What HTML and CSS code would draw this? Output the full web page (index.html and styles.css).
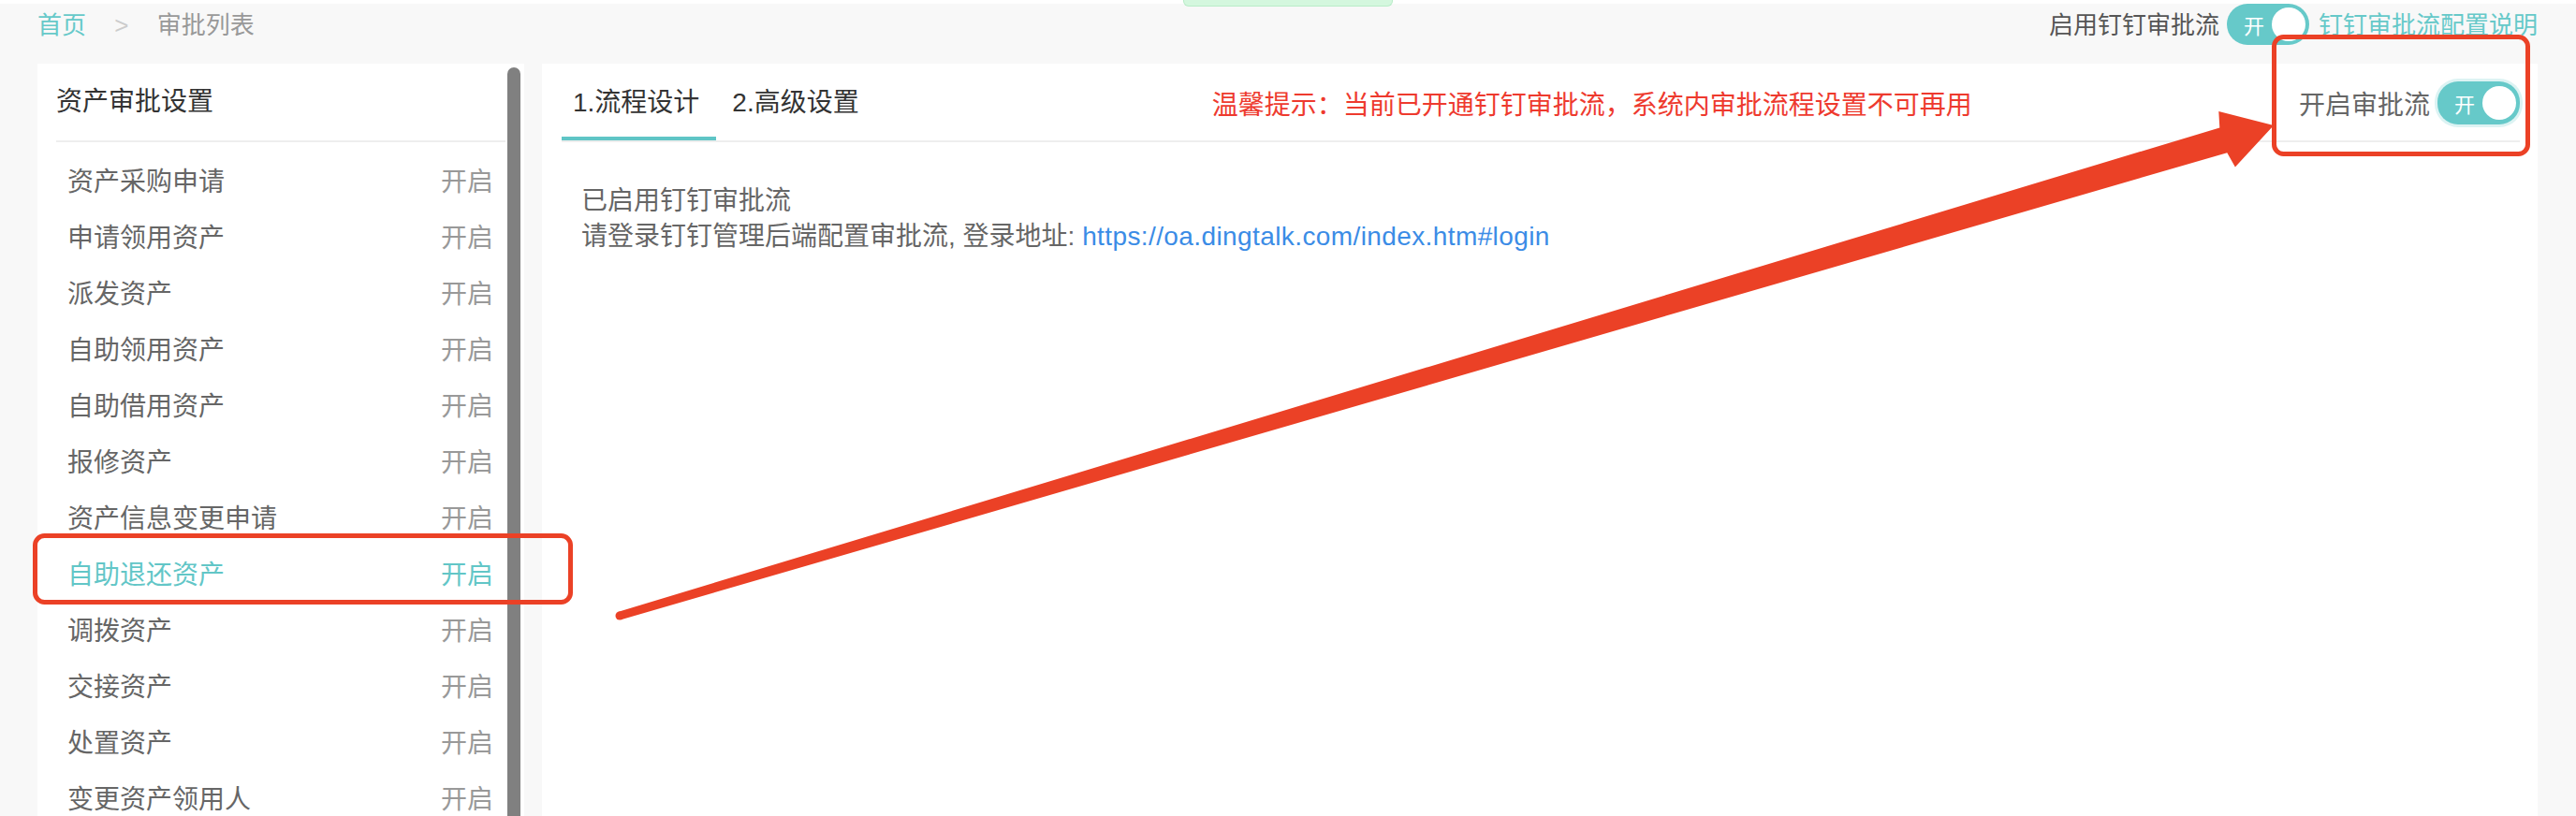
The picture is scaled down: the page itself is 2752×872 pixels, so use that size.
FILE: index.html
```html
<!DOCTYPE html>
<html lang="zh-CN">
<head>
  <meta charset="UTF-8">
  <meta name="viewport" content="width=device-width, initial-scale=1.0">
  <title>审批列表</title>
  <link rel="stylesheet" href="styles.css">
</head>
<body>

  <div class="top-strip"></div>
  <div class="toast"></div>

  <div class="header">
    <div class="breadcrumb">
      <a class="crumb-home" href="#">首页</a>
      <span class="crumb-sep">&gt;</span>
      <span class="crumb-current">审批列表</span>
    </div>
    <div class="header-right">
      <span class="header-label">启用钉钉审批流</span>
      <span class="switch"><span class="switch-text">开</span><span class="switch-knob"></span></span>
      <a class="header-link" href="#">钉钉审批流配置说明</a>
    </div>
  </div>

  <div class="main">
    <div class="side">
      <div class="side-main">
        <div class="side-title">资产审批设置</div>
        <ul class="side-list">
          <li class="side-item"><span>资产采购申请</span><span class="state">开启</span></li>
          <li class="side-item"><span>申请领用资产</span><span class="state">开启</span></li>
          <li class="side-item"><span>派发资产</span><span class="state">开启</span></li>
          <li class="side-item"><span>自助领用资产</span><span class="state">开启</span></li>
          <li class="side-item"><span>自助借用资产</span><span class="state">开启</span></li>
          <li class="side-item"><span>报修资产</span><span class="state">开启</span></li>
          <li class="side-item"><span>资产信息变更申请</span><span class="state">开启</span></li>
          <li class="side-item active"><span>自助退还资产</span><span class="state">开启</span></li>
          <li class="side-item"><span>调拨资产</span><span class="state">开启</span></li>
          <li class="side-item"><span>交接资产</span><span class="state">开启</span></li>
          <li class="side-item"><span>处置资产</span><span class="state">开启</span></li>
          <li class="side-item"><span>变更资产领用人</span><span class="state">开启</span></li>
        </ul>
      </div>
      <div class="scrollbar"></div>
    </div>

    <div class="content">
      <div class="tabs">
        <div class="tab active">1.流程设计</div>
        <div class="tab tab-second">2.高级设置</div>
        <div class="notice">温馨提示：当前已开通钉钉审批流，系统内审批流程设置不可再用</div>
        <div class="tabs-right">
          <span class="tabs-label">开启审批流</span>
          <span class="switch switch-focus"><span class="switch-text">开</span><span class="switch-knob"></span></span>
        </div>
      </div>
      <div class="content-body">
        <p>已启用钉钉审批流</p>
        <p>请登录钉钉管理后端配置审批流, 登录地址: <a class="link" href="#">https://oa.dingtalk.com/index.htm#login</a></p>
      </div>
    </div>
  </div>

  <!-- 标注：红框和箭头 -->
  <svg class="annot" width="2752" height="872" viewBox="0 0 2752 872">
    <rect x="37.5" y="572.5" width="572" height="71" rx="10" fill="none" stroke="#eb4126" stroke-width="5"/>
    <rect x="2429.5" y="39.5" width="271" height="125" rx="10" fill="none" stroke="#eb4126" stroke-width="5"/>
    <polygon fill="#eb4126" points="660.7,653.7 2371.3,136.4 2370.3,119 2429,134 2387.9,178.4 2379.3,163.2 663.3,662.3"/>
    <circle cx="662" cy="658" r="4.5" fill="#eb4126"/>
  </svg>

</body>
</html>
```

FILE: styles.css
```css
html, body {
  height: 872px;
  overflow: hidden;
}

body {
  font-family: "Liberation Sans", "Noto Sans CJK SC", sans-serif;
  background-color: #f8f8f8;
  margin: 0;
  padding: 0 41px 0 40px;
  position: relative;
  color: #666;
}

a {
  text-decoration: none;
}

.top-strip {
  height: 4px;
  margin: 0 -41px 0 -40px;
  background: #fff;
}

.toast {
  position: absolute;
  top: 0;
  left: 1264px;
  width: 222px;
  height: 6px;
  background: #d4f7de;
  border: 1px solid #b9ecc8;
  border-top: none;
  border-radius: 0 0 6px 6px;
}

.header {
  display: flex;
  justify-content: space-between;
  align-items: center;
  height: 40px;
  margin-bottom: 24px;
  font-size: 26px;
}

.crumb-home {
  color: #66c9c9;
}

.crumb-sep {
  color: #ccc;
  padding: 0 23px;
}

.crumb-current {
  color: #999;
}

.header-right {
  display: flex;
  align-items: center;
}

.header-label {
  color: #555;
  margin-right: 8px;
}

.header-link {
  color: #66c9c9;
  margin-left: 10px;
}

.switch {
  display: flex;
  align-items: center;
  justify-content: space-between;
  width: 88px;
  height: 44px;
  box-sizing: border-box;
  padding: 0 4px 0 18px;
  border-radius: 22px;
  background: #66c9c9;
  margin-top: 4px;
}

.switch-text {
  color: #fff;
  font-size: 22px;
}

.switch-knob {
  width: 36px;
  height: 36px;
  border-radius: 50%;
  background: #fff;
}

.switch-focus {
  height: 46px;
  margin-top: 0;
  box-shadow: 0 0 0 3px #dcf3f3;
}

.main {
  display: flex;
  gap: 19px;
  height: 804px;
}

.side {
  width: 520px;
  background: #fff;
  display: flex;
  padding-right: 4px;
  box-sizing: border-box;
}

.side-main {
  flex: 1;
}

.side-title {
  height: 82px;
  line-height: 82px;
  margin: 0 2px 0 20px;
  font-size: 28px;
  color: #333;
  border-bottom: 2px solid #eee;
}

.side-list {
  list-style: none;
  margin: 0 1px 0 20px;
  padding: 11px 0 0 0;
}

.side-item {
  display: flex;
  justify-content: space-between;
  align-items: center;
  height: 60px;
  box-sizing: border-box;
  padding: 0 14px 0 12px;
  font-size: 28px;
  border-bottom: 2px solid transparent;
}

.side-item .state {
  color: #999;
}

.side-item.active,
.side-item.active .state {
  color: #62c6c7;
}

.side-item.active {
  border-bottom-color: #e3f5f5;
}

.scrollbar {
  width: 14px;
  margin-top: 4px;
  background: #808080;
  border-radius: 7px 7px 0 0;
}

.content {
  flex: 1;
  background: #fff;
}

.tabs {
  display: flex;
  align-items: center;
  height: 82px;
  margin: 0 19px 0 21px;
  border-bottom: 2px solid #eee;
}

.tab {
  height: 82px;
  box-sizing: border-box;
  padding: 22px 18px 0 12px;
  line-height: 40px;
  font-size: 28px;
  color: #333;
}

.tab.active {
  border-bottom: 4px solid #5fc5c6;
}

.tab-second {
  padding-left: 17px;
}

.notice {
  margin-left: 359px;
  padding-top: 2px;
  font-size: 28px;
  color: #ee3a2e;
}

.tabs-right {
  margin-left: auto;
  display: flex;
  align-items: center;
  padding-top: 2px;
}

.tabs-label {
  font-size: 28px;
  color: #666;
  margin-right: 8px;
}

.content-body {
  padding: 44px 0 0 42px;
  font-size: 28px;
  line-height: 38px;
}

.content-body p {
  margin: 0;
}

.link {
  color: #3b8ce6;
  letter-spacing: 0.4px;
}

.annot {
  position: absolute;
  top: 0;
  left: 0;
  pointer-events: none;
}
```
